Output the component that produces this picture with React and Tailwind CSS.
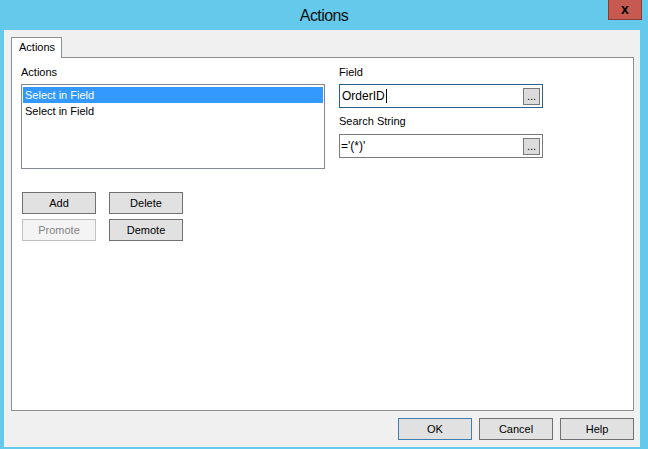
import React from 'react';

const font = { fontFamily: '"Liberation Sans", Arial, sans-serif' };

function Btn({ children, disabled, primary }) {
    const look = disabled
        ? 'border-[#bfbfbf] bg-[#f4f4f4] text-[#838383]'
        : primary
        ? 'border-[#3c7fb1] bg-[#e1e1e1] text-black'
        : 'border-[#707070] bg-[#e1e1e1] text-black';
    return (
        <div className={`w-[74px] h-[22px] border flex items-center justify-center text-[11px] leading-none ${look}`}>
            {children}
        </div>
    );
}

function BrowseBtn() {
    return (
        <div className="w-[17px] h-[17px] border border-[#7a7a7a] bg-[#dcdcdc] flex items-end justify-center pb-[2px] text-[11px] leading-none">
            ...
        </div>
    );
}

export default function App() {
    return (
        <div className="w-[648px] h-[449px] bg-[#64c9ea] flex flex-col overflow-hidden" style={font}>
            {/* Title bar */}
            <div className="relative h-[30px] flex items-center justify-center">
                <span className="text-[16px] tracking-[-0.6px] text-[#111] mt-[1px]">Actions</span>
                <div className="absolute right-[6px] top-0 w-[34px] h-[20px] bg-[#c75a50] border border-t-0 border-[#8c3a33] flex items-center justify-center">
                    <span className="text-[14px] font-bold leading-none text-black -mt-[2px]">x</span>
                </div>
            </div>

            {/* Client area */}
            <div className="ml-[4px] mr-[8px] mb-[2px] flex-1 bg-[#f0f0f0] flex flex-col pl-[7px] pr-[6px] pt-[7px] pb-[7px]">
                {/* Tab strip */}
                <div className="flex">
                    <div className="relative z-10 -mb-px w-[51px] h-[21px] bg-white border border-b-0 border-[#8e8f8f] pl-[7px] pt-[2px] text-[11px] leading-[14px]">
                        Actions
                    </div>
                </div>

                {/* Tab pane */}
                <div className="flex-1 bg-white border border-[#8e8f8f] pl-[9px] pt-[7px]">
                    <div className="flex gap-[14px]">
                        {/* Left column */}
                        <div className="flex flex-col">
                            <div className="text-[11px] leading-[14px] h-[14px]">Actions</div>
                            <div className="mt-[5px] w-[304px] h-[85px] border border-[#828790] bg-white pt-[2px] px-px text-[11px]">
                                <div className="h-[16px] bg-[#3399ff] text-white pl-[2px] leading-[16px]">Select in Field</div>
                                <div className="h-[16px] pl-[2px] leading-[16px]">Select in Field</div>
                            </div>

                            <div className="mt-[23px] ml-px flex flex-col gap-[5px]">
                                <div className="flex gap-[13px]">
                                    <Btn>Add</Btn>
                                    <Btn>Delete</Btn>
                                </div>
                                <div className="flex gap-[13px]">
                                    <Btn disabled>Promote</Btn>
                                    <Btn>Demote</Btn>
                                </div>
                            </div>
                        </div>

                        {/* Right column */}
                        <div className="flex flex-col">
                            <div className="text-[11px] leading-[14px] h-[14px]">Field</div>
                            <div className="mt-[5px] w-[204px] h-[24px] border border-[#2f5f8c] bg-white flex items-center pl-[2px] pr-[2px]">
                                <span className="text-[12px] leading-none">OrderID</span>
                                <span className="w-px h-[14px] bg-black ml-px"></span>
                                <div className="flex-1"></div>
                                <BrowseBtn />
                            </div>
                            <div className="mt-[6px] text-[11px] leading-[14px] h-[14px]">Search String</div>
                            <div className="mt-[6px] w-[204px] h-[24px] border border-[#7a7a7a] bg-white flex items-center pl-px pr-[2px]">
                                <span className="text-[12px] leading-none">='(*)'</span>
                                <div className="flex-1"></div>
                                <BrowseBtn />
                            </div>
                        </div>
                    </div>
                </div>

                {/* Dialog buttons */}
                <div className="mt-[7px] flex justify-end gap-[7px]">
                    <Btn primary>OK</Btn>
                    <Btn>Cancel</Btn>
                    <Btn>Help</Btn>
                </div>
            </div>
        </div>
    );
}
